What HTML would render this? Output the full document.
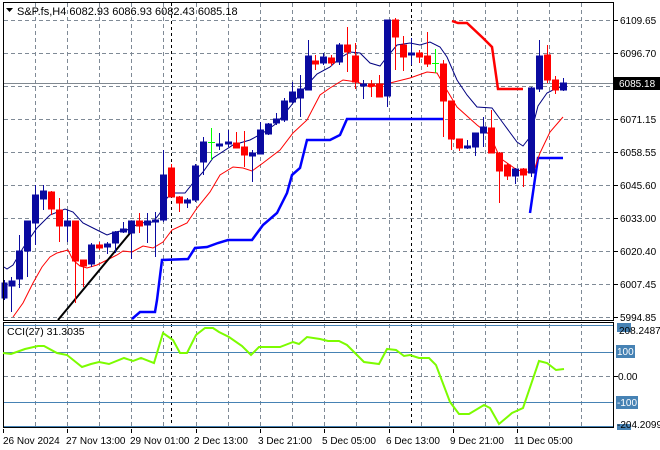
<!DOCTYPE html>
<html><head><meta charset="utf-8"><style>
html,body{margin:0;padding:0;background:#fff;width:660px;height:450px;overflow:hidden}
svg{display:block}
text{font-family:"Liberation Sans",sans-serif;font-size:10px;fill:#000}
</style></head><body>
<svg width="660" height="450" viewBox="0 0 660 450" xmlns="http://www.w3.org/2000/svg">
<rect width="660" height="450" fill="#fff"/>
<g stroke="#7f8a96" stroke-width="1" stroke-dasharray="4,3" fill="none">
<path d="M4 20.5H613M4 53.5H613M4 86.5H613M4 119.5H613M4 152.5H613M4 185.5H613M4 218.5H613M4 251.5H613M4 284.5H613M4 317.5H613"/>
<path d="M35.5 3V320M67.5 3V320M99.5 3V320M131.5 3V320M163.5 3V320M196.5 3V320M228.5 3V320M260.5 3V320M292.5 3V320M324.5 3V320M356.5 3V320M389.5 3V320M421.5 3V320M453.5 3V320M485.5 3V320M517.5 3V320M549.5 3V320M581.5 3V320"/>
<path d="M35.5 324V427M67.5 324V427M99.5 324V427M131.5 324V427M163.5 324V427M196.5 324V427M228.5 324V427M260.5 324V427M292.5 324V427M324.5 324V427M356.5 324V427M389.5 324V427M421.5 324V427M453.5 324V427M485.5 324V427M517.5 324V427M549.5 324V427M581.5 324V427"/>
<path d="M4 376.5H613"/>
</g>
<g stroke="#000" stroke-width="1" stroke-dasharray="3,3">
<path d="M171.5 3V320M411.5 3V320M171.5 324V427M411.5 324V427"/>
</g>
<path d="M4 83.5H613" stroke="#808890" stroke-width="1"/>
<polyline fill="none" stroke="#0000ff" stroke-width="2.5" points="132,319 140,312 155,312 157,300 162,260 188,259 195,248 207,247 218,243 228,240 252,240 263,225 277,213 287,193 292,175 300,168 307,140 330,140 340,135 347,119 443,119"/>
<polyline fill="none" stroke="#0000ff" stroke-width="2.5" points="530,213 538,158 563,158"/>
<polyline fill="none" stroke="#ff0000" stroke-width="2.5" points="452,21 458,23 467,23 483,38 492,47 498,89 523,89"/>
<polyline fill="none" stroke="#000080" stroke-width="1" points="4,267 7,269 13,265 23,248 37,228 50,215 65,209 73,212 83,223 97,230 107,235 115,232 127,230 140,223 153,222 160,213 167,198 173,193 185,193 193,183 203,172 213,158 233,145 250,140 263,133 277,123 290,107 307,85 317,74 330,67 340,58 350,52 360,53 370,63 380,66 387,57 397,45 410,43 420,45 430,42 440,47 447,57 457,80 467,95 477,107 492,108 503,123 517,142 523,146 530,137 538,106 547,93 557,88 563,87"/>
<polyline fill="none" stroke="#ff0000" stroke-width="1" points="13,317 23,303 33,283 42,267 50,257 57,253 68,250 73,260 80,266 87,268 97,265 107,260 117,255 123,251 132,252 143,246 153,248 163,242 172,230 187,223 197,208 210,192 220,175 233,167 243,168 252,171 263,163 280,150 293,133 307,120 320,95 330,88 343,80 357,82 370,87 390,83 410,78 427,72 437,73 445,87 457,107 477,125 490,135 500,158 517,170 533,173 540,153 550,132 563,117"/>
<line x1="58" y1="320" x2="131" y2="232" stroke="#000" stroke-width="2"/>
<g stroke-width="1">
<g stroke="#0a0aa0" fill="#0a0aa0">
<line x1="4.5" y1="280" x2="4.5" y2="300"/><rect x="2" y="283" width="5" height="15"/>
<line x1="11.5" y1="277" x2="11.5" y2="312"/><rect x="9" y="281" width="6" height="5"/>
<line x1="19.5" y1="235" x2="19.5" y2="288"/><rect x="16.5" y="251" width="6" height="28"/>
<line x1="27.5" y1="221" x2="27.5" y2="277"/><rect x="24.5" y="221" width="6" height="30"/>
<line x1="35.5" y1="185" x2="35.5" y2="245"/><rect x="32.5" y="195" width="6" height="28"/>
<line x1="43.5" y1="185" x2="43.5" y2="210"/><rect x="40.5" y="191" width="6" height="8"/>
<line x1="67.5" y1="210" x2="67.5" y2="242"/><rect x="64.5" y="221" width="6" height="5"/>
<line x1="91.5" y1="243" x2="91.5" y2="267"/><rect x="88.5" y="245" width="6" height="19"/>
<line x1="107.5" y1="242" x2="107.5" y2="254"/><rect x="104.5" y="244" width="6" height="3"/>
<line x1="115.5" y1="231" x2="115.5" y2="253"/><rect x="112.5" y="232" width="6" height="11"/>
<line x1="123.5" y1="222" x2="123.5" y2="233"/><rect x="120.5" y="229" width="6" height="3"/>
<line x1="131.5" y1="221" x2="131.5" y2="259"/><rect x="128.5" y="221" width="6" height="12"/>
<line x1="147.5" y1="213" x2="147.5" y2="243"/><rect x="144.5" y="221" width="6" height="4"/>
<line x1="155.5" y1="212" x2="155.5" y2="257"/><rect x="152.5" y="220" width="6" height="2"/>
<line x1="163.5" y1="150" x2="163.5" y2="222"/><rect x="160.5" y="175" width="6" height="45"/>
<line x1="187.5" y1="198" x2="187.5" y2="208"/><rect x="184.5" y="200" width="6" height="3"/>
<line x1="195.5" y1="164" x2="195.5" y2="202"/><rect x="192.5" y="166" width="6" height="34"/>
<line x1="203.5" y1="137" x2="203.5" y2="175"/><rect x="200.5" y="142" width="6" height="20"/>
<line x1="219.5" y1="133" x2="219.5" y2="150"/><rect x="216.5" y="144" width="6" height="2"/>
<line x1="228.5" y1="130" x2="228.5" y2="147"/><rect x="225.5" y="142" width="6" height="2"/>
<line x1="252.5" y1="150" x2="252.5" y2="182"/><rect x="249.5" y="153" width="6" height="3"/>
<line x1="260.5" y1="122" x2="260.5" y2="154"/><rect x="257.5" y="130" width="6" height="24"/>
<line x1="268.5" y1="123" x2="268.5" y2="135"/><rect x="265.5" y="124" width="6" height="10"/>
<line x1="276.5" y1="113" x2="276.5" y2="125"/><rect x="273.5" y="119" width="6" height="4"/>
<line x1="284.5" y1="98" x2="284.5" y2="122"/><rect x="281.5" y="101" width="6" height="19"/>
<line x1="292.5" y1="82" x2="292.5" y2="103"/><rect x="289.5" y="92" width="6" height="10"/>
<line x1="300.5" y1="75" x2="300.5" y2="117"/><rect x="297.5" y="89" width="6" height="9"/>
<line x1="308.5" y1="40" x2="308.5" y2="90"/><rect x="305.5" y="56" width="6" height="34"/>
<line x1="323.5" y1="53" x2="323.5" y2="65"/><rect x="320.5" y="57" width="6" height="6"/>
<line x1="339.5" y1="43" x2="339.5" y2="65"/><rect x="336.5" y="45" width="6" height="17"/>
<line x1="363.5" y1="80" x2="363.5" y2="99"/><rect x="360.5" y="84" width="6" height="2"/>
<line x1="387.5" y1="20" x2="387.5" y2="107"/><rect x="384.5" y="20" width="6" height="76"/>
<line x1="411.5" y1="38" x2="411.5" y2="65"/><rect x="408.5" y="53" width="6" height="2"/>
<line x1="467.5" y1="140" x2="467.5" y2="149"/><rect x="464.5" y="146" width="6" height="2"/>
<line x1="475.5" y1="133" x2="475.5" y2="156"/><rect x="472.5" y="133" width="6" height="14"/>
<line x1="483.5" y1="117" x2="483.5" y2="147"/><rect x="480.5" y="127" width="6" height="6"/>
<line x1="515.5" y1="168" x2="515.5" y2="184"/><rect x="512.5" y="169" width="6" height="7"/>
<line x1="531.5" y1="87" x2="531.5" y2="177"/><rect x="528.5" y="88" width="6" height="85"/>
<line x1="539.5" y1="40" x2="539.5" y2="92"/><rect x="536.5" y="56" width="6" height="33"/>
<line x1="563.5" y1="78" x2="563.5" y2="91"/><rect x="560.5" y="83" width="6" height="7"/>
</g>
<g stroke="#ff0000" fill="#ff0000">
<line x1="51.5" y1="191" x2="51.5" y2="215"/><rect x="48.5" y="192" width="6" height="17"/>
<line x1="59.5" y1="198" x2="59.5" y2="242"/><rect x="56.5" y="210" width="6" height="16"/>
<line x1="75.5" y1="221" x2="75.5" y2="303"/><rect x="72.5" y="221" width="6" height="40"/>
<line x1="83.5" y1="260" x2="83.5" y2="287"/><rect x="80.5" y="260" width="6" height="6"/>
<line x1="99.5" y1="242" x2="99.5" y2="250"/><rect x="96.5" y="245" width="6" height="3"/>
<line x1="139.5" y1="213" x2="139.5" y2="233"/><rect x="136.5" y="221" width="6" height="5"/>
<line x1="171.5" y1="164" x2="171.5" y2="197"/><rect x="168.5" y="168" width="6" height="29"/>
<line x1="179.5" y1="196" x2="179.5" y2="212"/><rect x="176.5" y="197" width="6" height="6"/>
<line x1="236.5" y1="132" x2="236.5" y2="148"/><rect x="233.5" y="143" width="6" height="5"/>
<line x1="244.5" y1="131" x2="244.5" y2="167"/><rect x="241.5" y="147" width="6" height="8"/>
<line x1="315.5" y1="55" x2="315.5" y2="70"/><rect x="312.5" y="61" width="6" height="3"/>
<line x1="331.5" y1="55" x2="331.5" y2="66"/><rect x="328.5" y="58" width="6" height="5"/>
<line x1="347.5" y1="27" x2="347.5" y2="72"/><rect x="344.5" y="45" width="6" height="7"/>
<line x1="355.5" y1="43" x2="355.5" y2="89"/><rect x="352.5" y="56" width="6" height="26"/>
<line x1="371.5" y1="80" x2="371.5" y2="97"/><rect x="368.5" y="84" width="6" height="2"/>
<line x1="379.5" y1="75" x2="379.5" y2="97"/><rect x="376.5" y="84" width="6" height="13"/>
<line x1="395.5" y1="18" x2="395.5" y2="70"/><rect x="392.5" y="20" width="6" height="17"/>
<line x1="403.5" y1="36" x2="403.5" y2="71"/><rect x="400.5" y="45" width="6" height="12"/>
<line x1="419.5" y1="50" x2="419.5" y2="63"/><rect x="416.5" y="53" width="6" height="4"/>
<line x1="427.5" y1="32" x2="427.5" y2="67"/><rect x="424.5" y="56" width="6" height="8"/>
<line x1="443.5" y1="60" x2="443.5" y2="137"/><rect x="440.5" y="64" width="6" height="37"/>
<line x1="451.5" y1="101" x2="451.5" y2="150"/><rect x="448.5" y="101" width="6" height="38"/>
<line x1="459.5" y1="139" x2="459.5" y2="151"/><rect x="456.5" y="139" width="6" height="9"/>
<line x1="491.5" y1="110" x2="491.5" y2="153"/><rect x="488.5" y="128" width="6" height="25"/>
<line x1="499.5" y1="152" x2="499.5" y2="203"/><rect x="496.5" y="153" width="6" height="18"/>
<line x1="507.5" y1="163" x2="507.5" y2="180"/><rect x="504.5" y="165" width="6" height="11"/>
<line x1="523.5" y1="168" x2="523.5" y2="187"/><rect x="520.5" y="169" width="6" height="6"/>
<line x1="547.5" y1="45" x2="547.5" y2="83"/><rect x="544.5" y="55" width="6" height="25"/>
<line x1="555.5" y1="76" x2="555.5" y2="94"/><rect x="552.5" y="80" width="6" height="10"/>
</g>
<g stroke="#00ff00">
<line x1="211.5" y1="128" x2="211.5" y2="160"/><line x1="208" y1="142.5" x2="215" y2="142.5"/>
<line x1="435.5" y1="49" x2="435.5" y2="73"/><line x1="432" y1="63.5" x2="439" y2="63.5"/>
</g>
</g>
<rect x="3.5" y="2.5" width="610" height="318" fill="none" stroke="#000"/>
<rect x="3.5" y="322.5" width="610" height="105" fill="none" stroke="#000"/>
<g stroke="#4682b4" stroke-width="1">
<path d="M4 325.5H613M4 352.5H613M4 402.5H613M4 426.5H613"/>
</g>
<polyline fill="none" stroke="#7cfc00" stroke-width="2" points="3,353 11,354 25,349 38,346 44,346 57,353 67,355 82,367 91,364 99,362 109,364 124,358 133,361 141,358 154,363 163,333 173,340 180,353 187,353 196,335 205,328 213,328 219,332 229,337 242,346 251,355 259,347 280,347 293,342 299,344 307,337 320,339 328,341 339,341 347,345 356,354 364,362 379,364 387,349 396,350 404,356 410,355 419,358 429,358 436,365 450,402 459,414 469,414 484,405 490,408 499,424 512,413 523,408 539,361 547,363 556,370 564,369"/>
<g stroke="#000">
<path d="M614 20.5h4M614 53.5h4M614 119.5h4M614 152.5h4M614 185.5h4M614 218.5h4M614 251.5h4M614 284.5h4M614 317.5h4M614 376.5h4"/>
<path d="M3.5 429v4M67.5 429v4M131.5 429v4M196.5 429v4M260.5 429v4M324.5 429v4M389.5 429v4M453.5 429v4M517.5 429v4"/>
</g>
<path d="M6 8h7l-3.5 4z" fill="#000"/>
<text x="17" y="15" style="font-size:11px">S&amp;P.fs,H4  6082.93 6086.93 6082.43 6085.18</text>
<text x="7" y="335" style="font-size:10.5px">CCI(27) 31.3035</text>
<text x="620" y="24">6109.65</text>
<text x="620" y="57">6096.70</text>
<rect x="614" y="77" width="46" height="13" fill="#000"/>
<text x="619" y="87" style="fill:#fff">6085.18</text>
<text x="620" y="123">6071.15</text>
<text x="620" y="156">6058.55</text>
<text x="620" y="189">6045.60</text>
<text x="620" y="222">6033.00</text>
<text x="620" y="255">6020.40</text>
<text x="620" y="288">6007.45</text>
<text x="620" y="321">5994.85</text>
<rect x="617" y="323" width="14" height="9" fill="#4682b4"/>
<text x="619" y="334">208.2487</text>
<rect x="616" y="345" width="19" height="13" fill="#4682b4"/>
<text x="617" y="355" style="fill:#fff">100</text>
<text x="618" y="380">0.00</text>
<rect x="616" y="396" width="22" height="13" fill="#4682b4"/>
<text x="617" y="406" style="fill:#fff">-100</text>
<rect x="617" y="424" width="14" height="6" fill="#4682b4"/>
<text x="617" y="428">-204.2099</text>
<text x="3" y="444">26 Nov 2024</text>
<text x="66" y="444">27 Nov 13:00</text>
<text x="130" y="444">29 Nov 01:00</text>
<text x="194" y="444">2 Dec 13:00</text>
<text x="258" y="444">3 Dec 21:00</text>
<text x="322" y="444">5 Dec 05:00</text>
<text x="386" y="444">6 Dec 13:00</text>
<text x="450" y="444">9 Dec 21:00</text>
<text x="514" y="444">11 Dec 05:00</text>
</svg>
</body></html>
